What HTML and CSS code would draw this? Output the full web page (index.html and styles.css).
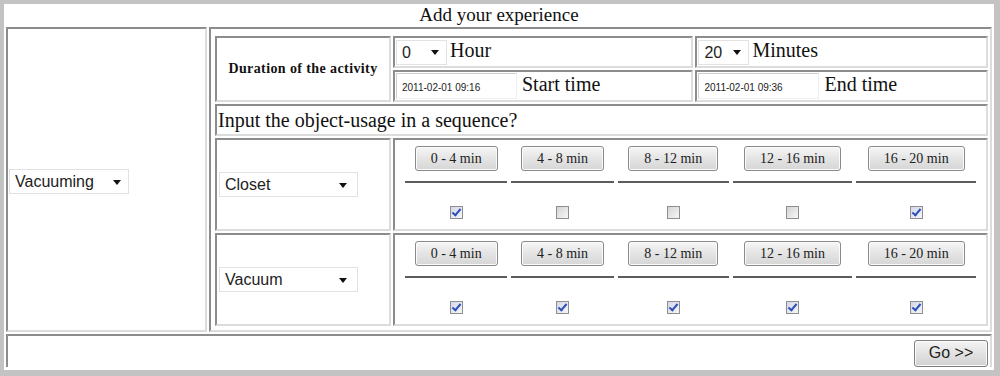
FILE: index.html
```html
<!DOCTYPE html>
<html lang="en">
<head>
  <meta charset="UTF-8" />
  <title>Add your experience</title>
  <link rel="stylesheet" href="styles.css">
</head>
<body>
  <div class="frame">
    <table class="outer">
      <tr>
        <td colspan="2" class="title">Add your experience</td>
      </tr>
      <tr>
        <td class="cell activity">
          <span class="pick"><select class="sel sel-activity"><option>Vacuuming</option></select></span>
        </td>
        <td class="cell detail">
          <table class="inner">
            <tr class="row-time">
              <td class="cell duration" rowspan="2">Duration of the activity</td>
              <td class="cell">
                <span class="pick"><select class="sel sel-num"><option>0</option></select></span> Hour
              </td>
              <td class="cell">
                <span class="pick"><select class="sel sel-num"><option>20</option></select></span> Minutes
              </td>
            </tr>
            <tr class="row-stamp">
              <td class="cell"><input class="stamp" type="text" value="2011-02-01 09:16"> Start time</td>
              <td class="cell"><input class="stamp" type="text" value="2011-02-01 09:36"> End time</td>
            </tr>
            <tr>
              <td class="cell prompt" colspan="3">Input the object-usage in a sequence?</td>
            </tr>

            <!-- object 1 -->
            <tr>
              <td class="cell object">
                <span class="pick"><select class="sel sel-object"><option>Closet</option></select></span>
              </td>
              <td class="cell usage" colspan="2">
                <table class="slots">
                  <tr class="slot-buttons">
                    <td><button class="slot">0 - 4 min</button></td>
                    <td><button class="slot">4 - 8 min</button></td>
                    <td><button class="slot">8 - 12 min</button></td>
                    <td><button class="slot">12 - 16 min</button></td>
                    <td><button class="slot">16 - 20 min</button></td>
                  </tr>
                  <tr class="slot-lines">
                    <td></td><td></td><td></td><td></td><td></td>
                  </tr>
                  <tr class="slot-checks">
                    <td><input type="checkbox" class="tick" checked></td>
                    <td><input type="checkbox" class="tick"></td>
                    <td><input type="checkbox" class="tick"></td>
                    <td><input type="checkbox" class="tick"></td>
                    <td><input type="checkbox" class="tick" checked></td>
                  </tr>
                </table>
              </td>
            </tr>

            <!-- object 2 -->
            <tr>
              <td class="cell object">
                <span class="pick"><select class="sel sel-object"><option>Vacuum</option></select></span>
              </td>
              <td class="cell usage" colspan="2">
                <table class="slots">
                  <tr class="slot-buttons">
                    <td><button class="slot">0 - 4 min</button></td>
                    <td><button class="slot">4 - 8 min</button></td>
                    <td><button class="slot">8 - 12 min</button></td>
                    <td><button class="slot">12 - 16 min</button></td>
                    <td><button class="slot">16 - 20 min</button></td>
                  </tr>
                  <tr class="slot-lines">
                    <td></td><td></td><td></td><td></td><td></td>
                  </tr>
                  <tr class="slot-checks">
                    <td><input type="checkbox" class="tick" checked></td>
                    <td><input type="checkbox" class="tick" checked></td>
                    <td><input type="checkbox" class="tick" checked></td>
                    <td><input type="checkbox" class="tick" checked></td>
                    <td><input type="checkbox" class="tick" checked></td>
                  </tr>
                </table>
              </td>
            </tr>
          </table>
        </td>
      </tr>
      <tr>
        <td colspan="2" class="cell footer"><button class="go">Go &gt;&gt;</button></td>
      </tr>
    </table>
  </div>
</body>
</html>
```

FILE: styles.css
```css
body {
  margin: 0;
  background: #c3c3c3;
  font-family: 'Liberation Serif', 'Times New Roman', serif;
  color: #111;
}

.frame {
  background: #ffffff;
  margin: 4px 6px 6px 4px;
  height: 366px;
  overflow: hidden;
}

table {
  border-collapse: separate;
}

.outer {
  width: 100%;
  border-spacing: 2px;
  margin-top: -2px;
}

.title {
  text-align: center;
  font-size: 19px;
  height: 21px;
  padding: 0;
  line-height: 21px;
}

/* old style table cells: dark top/left, light bottom/right */
.cell {
  border: 2px solid;
  border-color: #8c8c8c #dcdcdc #dcdcdc #8c8c8c;
  padding: 0;
}

.activity {
  width: 196px;
  padding: 4px 0 0 1px;
}

.detail {
  padding: 5px 0 2px 2px;
  vertical-align: top;
}

.inner {
  width: 100%;
  border-spacing: 2px;
}

.duration {
  width: 172px;
  text-align: center;
  font-size: 14px;
  font-weight: bold;
  letter-spacing: 0.4px;
}

.row-time td,
.row-stamp td {
  font-size: 20px;
  padding: 1px 1px;
}

.row-time td { height: 26px; }
.row-stamp td { height: 24px; }
.row-time td.duration { font-size: 14px; padding: 0; }

.prompt {
  font-size: 20px;
  height: 28px;
  padding-left: 1px;
}

.object {
  padding-left: 2px;
}

.usage {
  padding: 0 6px;
  vertical-align: top;
}

/* selects */
.pick {
  display: inline-block;
  position: relative;
  vertical-align: middle;
  margin-right: -2px;
}

.pick::after {
  content: "";
  position: absolute;
  top: 50%;
  margin-top: -2px;
  right: 8px;
  border-left: 4px solid transparent;
  border-right: 4px solid transparent;
  border-top: 5px solid #111;
  pointer-events: none;
}

.sel {
  appearance: none;
  -webkit-appearance: none;
  background: #ffffff;
  border: 1px solid #e2e2e2;
  border-radius: 0;
  font-family: 'Liberation Sans', Arial, sans-serif;
  font-size: 16px;
  color: #222;
  margin: 0;
  padding: 0 0 0 5px;
  height: 25px;
}

.sel-activity {
  width: 120px;
}

.sel-num {
  width: 51px;
}

.sel-object {
  width: 139px;
}
.object .pick::after { right: 11px; }

/* date stamps */
.stamp {
  font-family: 'Liberation Sans', Arial, sans-serif;
  font-size: 10px;
  width: 121px;
  height: 26px;
  box-sizing: border-box;
  border: 1px solid;
  border-color: #cfcfcf #efefef #efefef #cfcfcf;
  padding: 2px 0 0 5px;
  margin: 0;
  vertical-align: middle;
  color: #222;
}

/* time slot grid */
.slots {
  width: 100%;
  border-spacing: 4px 0;
}

.slots td {
  text-align: center;
  padding: 0;
}

.slot-buttons td {
  padding-top: 6px;
  height: 25px;
}

.slot-lines td {
  height: 10px;
  border-bottom: 2px solid #5c5c5c;
}

.slot-checks td {
  height: 36px;
  padding-top: 10px;
}

.slot {
  font-family: 'Liberation Serif', 'Times New Roman', serif;
  font-size: 14px;
  color: #222;
  height: 25px;
  padding: 0 15px;
  border: 1px solid #8a8a8a;
  border-radius: 3px;
  background: linear-gradient(#f6f6f6, #e4e4e4 50%, #d6d6d6);
  box-shadow: inset 0 0 0 1px #fbfbfb;
}

.tick {
  appearance: none;
  -webkit-appearance: none;
  width: 13px;
  height: 13px;
  margin: 0;
  border: 1px solid #8e8e8e;
  background: linear-gradient(135deg, #d4d4d4, #f7f7f7);
  position: relative;
  vertical-align: middle;
}

.tick:checked {
  background: linear-gradient(135deg, #d2d8e6, #f4f6fb);
}

.tick:checked::before {
  content: "";
  position: absolute;
  left: 3px;
  top: 0;
  width: 3px;
  height: 7px;
  border: solid #2f4fb8;
  border-width: 0 2px 2px 0;
  transform: rotate(40deg);
}

.footer {
  height: 31px;
  text-align: right;
  padding-right: 2px;
  border-bottom: none;
}

.go {
  font-family: 'Liberation Sans', Arial, sans-serif;
  font-size: 16px;
  color: #222;
  width: 74px;
  height: 27px;
  margin-top: 3px;
  border: 1px solid #7f7f7f;
  border-radius: 3px;
  background: linear-gradient(#f4f4f4, #e2e2e2 50%, #d2d2d2);
  box-shadow: inset 0 0 0 1px #fbfbfb;
}
```
